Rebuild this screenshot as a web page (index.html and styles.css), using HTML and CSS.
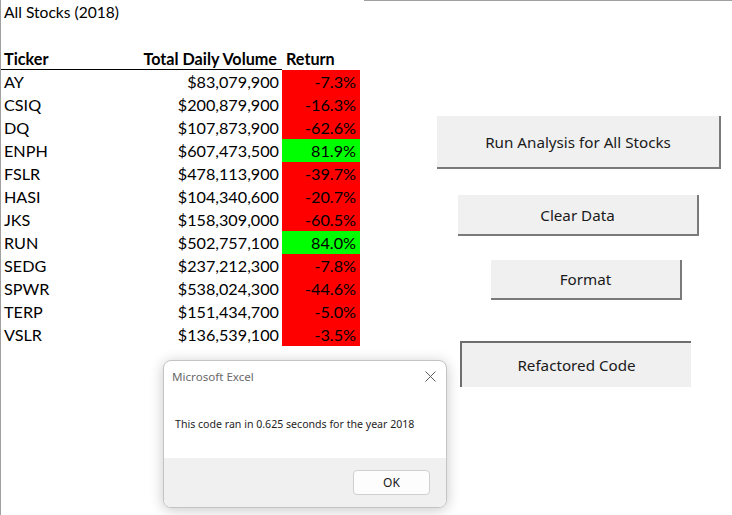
FILE: index.html
```html
<!DOCTYPE html>
<html>
<head>
<meta charset="utf-8">
<link rel="stylesheet" href="styles.css">
</head>
<body>
<div class="screen">
  <div class="topline"></div>
  <div class="sheet">
    <div class="row"><div class="cell a title">All Stocks (2018)</div></div>
    <div class="row"><div class="cell a"></div></div>
    <div class="row head">
      <div class="cell a">Ticker</div>
      <div class="cell b">Total Daily Volume</div>
      <div class="cell c">Return</div>
    </div>
    <div class="row"><div class="cell a">AY</div><div class="cell b">$83,079,900</div><div class="cell c neg">-7.3%</div></div>
    <div class="row"><div class="cell a">CSIQ</div><div class="cell b">$200,879,900</div><div class="cell c neg">-16.3%</div></div>
    <div class="row"><div class="cell a">DQ</div><div class="cell b">$107,873,900</div><div class="cell c neg">-62.6%</div></div>
    <div class="row"><div class="cell a">ENPH</div><div class="cell b">$607,473,500</div><div class="cell c pos">81.9%</div></div>
    <div class="row"><div class="cell a">FSLR</div><div class="cell b">$478,113,900</div><div class="cell c neg">-39.7%</div></div>
    <div class="row"><div class="cell a">HASI</div><div class="cell b">$104,340,600</div><div class="cell c neg">-20.7%</div></div>
    <div class="row"><div class="cell a">JKS</div><div class="cell b">$158,309,000</div><div class="cell c neg">-60.5%</div></div>
    <div class="row"><div class="cell a">RUN</div><div class="cell b">$502,757,100</div><div class="cell c pos">84.0%</div></div>
    <div class="row"><div class="cell a">SEDG</div><div class="cell b">$237,212,300</div><div class="cell c neg">-7.8%</div></div>
    <div class="row"><div class="cell a">SPWR</div><div class="cell b">$538,024,300</div><div class="cell c neg">-44.6%</div></div>
    <div class="row"><div class="cell a">TERP</div><div class="cell b">$151,434,700</div><div class="cell c neg">-5.0%</div></div>
    <div class="row"><div class="cell a">VSLR</div><div class="cell b">$136,539,100</div><div class="cell c neg">-3.5%</div></div>
  </div>

  <div class="btn btn-run">Run Analysis for All Stocks</div>
  <div class="btn btn-clear">Clear Data</div>
  <div class="btn btn-format">Format</div>
  <div class="btn btn-refactor">Refactored Code</div>

  <div class="dialog">
    <div class="dlg-top">
      <div class="dlg-title">
        <span>Microsoft Excel</span>
        <svg class="dlg-close" width="11" height="11" viewBox="0 0 11 11"><path d="M0.5 0.5 L10.5 10.5 M10.5 0.5 L0.5 10.5" stroke="#5a5a5a" stroke-width="1" fill="none"/></svg>
      </div>
      <div class="dlg-body">This code ran in 0.625 seconds for the year 2018</div>
    </div>
    <div class="dlg-foot">
      <div class="ok">OK</div>
    </div>
  </div>
</div>
</body>
</html>
```

FILE: styles.css
```css
html, body {
  margin: 0;
  padding: 0;
  background: #ffffff;
}

.screen {
  position: relative;
  width: 732px;
  height: 515px;
  overflow: hidden;
  border-left: 1px solid #a0a0a0;
  box-sizing: border-box;
  font-family: "Lato", "Liberation Sans", sans-serif;
}

.topline {
  position: absolute;
  left: 363px;
  top: 0;
  right: 0;
  height: 1px;
  background: #a0a0a0;
}

.sheet {
  display: flex;
  flex-direction: column;
  width: 360px;
}

.row {
  display: flex;
  height: 23px;
}

.cell {
  height: 23px;
  line-height: 24px;
  font-size: 16.2px;
  color: #000;
  white-space: nowrap;
  box-sizing: border-box;
}

.cell.a {
  width: 130px;
  padding-left: 3px;
}

.cell.b {
  width: 151px;
  text-align: right;
  padding-right: 3px;
}

.cell.c {
  width: 78px;
  text-align: right;
  padding-right: 4px;
}

.title {
  width: 200px !important;
  font-size: 15.6px;
}

.row.head {
  height: 24px;
}

.row.head .cell {
  font-weight: bold;
  line-height: 25px;
}

.row.head .cell.a,
.row.head .cell.b {
  height: 24px;
  border-bottom: 1px solid #000;
}

.row.head .cell.b {
  padding-right: 5px;
}

.row.head .cell.c {
  text-align: left;
  padding-left: 4px;
}

.neg {
  background: #ff0000;
}

.pos {
  background: #00ff00;
}

.btn {
  position: absolute;
  display: flex;
  align-items: center;
  justify-content: center;
  background: #f0f0f0;
  font-family: "Noto Sans", "Open Sans", sans-serif;
  font-size: 15.2px;
  color: #1a1a1a;
  box-sizing: border-box;
}

.btn-run {
  left: 436px;
  top: 116px;
  width: 284px;
  height: 53px;
  border-right: 2px solid #7a7a7a;
  border-bottom: 2px solid #7a7a7a;
}

.btn-clear {
  left: 457px;
  top: 195px;
  width: 241px;
  height: 41px;
  border-right: 2px solid #7a7a7a;
  border-bottom: 2px solid #7a7a7a;
}

.btn-format {
  left: 490px;
  top: 260px;
  width: 191px;
  height: 40px;
  border-right: 2px solid #7a7a7a;
  border-bottom: 2px solid #7a7a7a;
}

.btn-refactor {
  left: 459px;
  top: 341px;
  width: 231px;
  height: 46px;
  border-top: 2px solid #6e6e6e;
  border-left: 2px solid #6e6e6e;
}

.dialog {
  position: absolute;
  left: 162px;
  top: 360px;
  width: 284px;
  height: 148px;
  background: #ffffff;
  border: 1px solid #c4c4c4;
  border-radius: 8px;
  box-shadow: 0 2px 14px rgba(0, 0, 0, 0.22);
  box-sizing: border-box;
  display: flex;
  flex-direction: column;
  overflow: hidden;
  font-family: "Noto Sans", "Open Sans", sans-serif;
}

.dlg-top {
  flex: 1;
  display: flex;
  flex-direction: column;
}

.dlg-title {
  display: flex;
  align-items: center;
  justify-content: space-between;
  height: 31px;
  padding: 0 10px 0 8px;
  font-size: 11.6px;
  color: #6a6a6a;
}

.dlg-close {
  display: block;
}

.dlg-body {
  padding: 25px 0 0 11px;
  font-size: 10.6px;
  color: #1e1e1e;
  white-space: nowrap;
}

.dlg-foot {
  height: 49px;
  background: #f0f0f0;
  display: flex;
  justify-content: flex-end;
  align-items: flex-start;
  padding: 12px 16px 0 0;
  box-sizing: border-box;
}

.ok {
  width: 77px;
  height: 25px;
  background: #fdfdfd;
  border: 1px solid #d0d0d0;
  border-radius: 4px;
  box-sizing: border-box;
  display: flex;
  align-items: center;
  justify-content: center;
  font-size: 12px;
  color: #1a1a1a;
}
```
